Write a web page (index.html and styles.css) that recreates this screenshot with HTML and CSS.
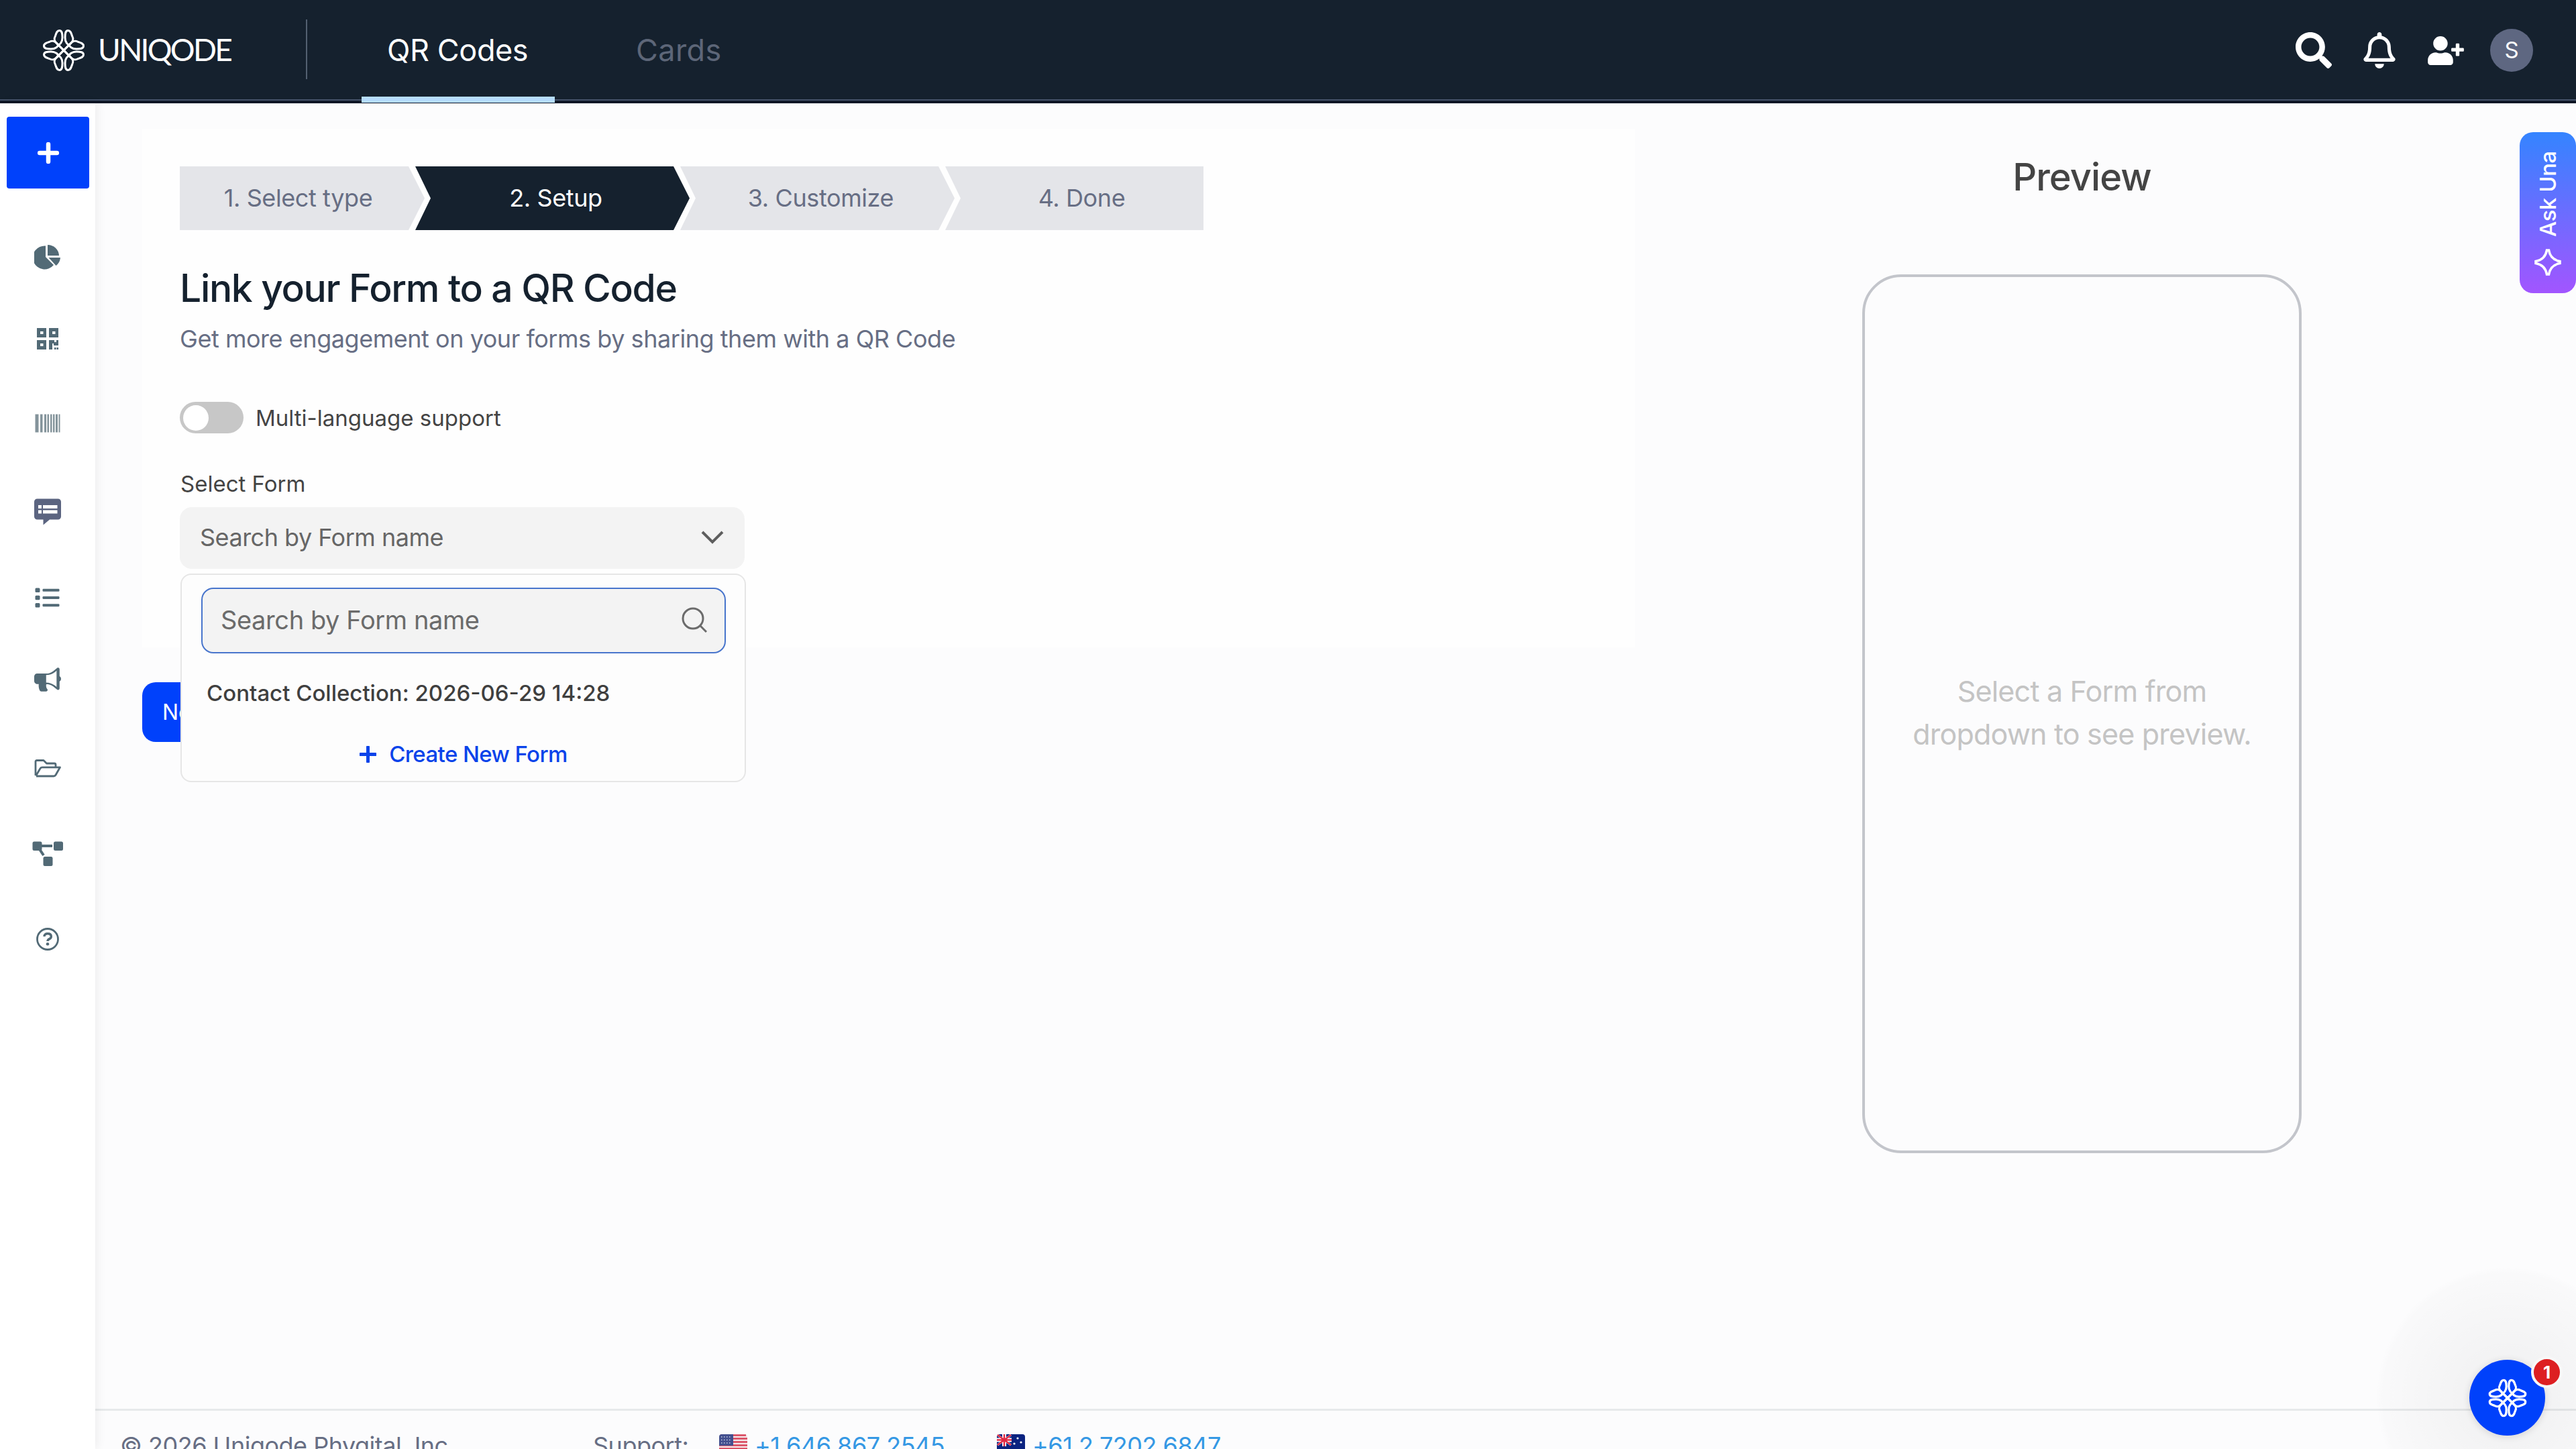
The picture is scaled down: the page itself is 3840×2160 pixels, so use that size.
FILE: index.html
```html
<!doctype html>
<html lang="en">
  <head>
    <meta charset="utf-8">
    <title>Uniqode - Link your Form to a QR Code</title>
    <meta name="viewport" content="width=device-width">
    <link rel="stylesheet" href="styles.css">
  </head>
  <body>
    <!-- shared logo mark -->
    <svg class="defs" width="0" height="0">
      <defs>
        <path id="petal" d="M0 0L-9 -9C-14.500 -13.500 -15 -17 -12.500 -21.500C-11 -26 -10 -29.500 -6.500 -29.500C-2.500 -29.500 -2 -25 -2 -19C-2 -12 -6 -8 -8.500 -8.500" />
        <g id="pair">
          <use href="#petal" />
          <use href="#petal" transform="scale(-1 1)" />
        </g>
        <g id="flower" fill="none" stroke="#fff" stroke-linejoin="round">
          <use href="#pair" />
          <use href="#pair" transform="rotate(90)" />
          <use href="#pair" transform="rotate(180)" />
          <use href="#pair" transform="rotate(270)" />
        </g>
      </defs>
    </svg>

    <header class="topbar">
      <div class="brand">
        <svg class="brand-mark" viewBox="-32 -32 64 64" stroke-width="3"><use href="#flower" /></svg>
        <span class="brand-name">UNIQODE</span>
      </div>
      <nav class="tabs">
        <a class="tab active">QR Codes</a>
        <a class="tab">Cards</a>
      </nav>
      <div class="tools">
        <svg class="tool-search" viewBox="0 0 512 512"><path fill="#fff" d="M505 442.700L405.300 343c-4.500-4.500-10.600-7-17-7H372c27.600-35.300 44-79.700 44-128C416 93.100 322.900 0 208 0S0 93.100 0 208s93.100 208 208 208c48.300 0 92.700-16.400 128-44v16.300c0 6.400 2.500 12.500 7 17l99.700 99.700c9.400 9.400 24.600 9.400 33.900 0l28.300-28.300c9.400-9.400 9.400-24.600.1-34zM208 336c-70.700 0-128-57.200-128-128 0-70.700 57.200-128 128-128 70.700 0 128 57.200 128 128 0 70.700-57.200 128-128 128z" /></svg>
        <svg class="tool-bell" viewBox="0 0 448 512"><path fill="#fff" d="M439.390 362.290c-19.320-20.760-55.470-51.990-55.470-154.290 0-77.700-54.480-139.900-127.940-155.160V32c0-17.670-14.320-32-31.980-32s-31.980 14.330-31.980 32v20.840C118.560 68.100 64.080 130.300 64.080 208c0 102.300-36.150 133.530-55.470 154.290-6 6.450-8.660 14.160-8.610 21.710.110 16.400 12.980 32 32.100 32h383.800c19.120 0 32-15.600 32.100-32 .050-7.550-2.610-15.270-8.610-21.710zM67.530 368c21.220-27.970 44.420-74.330 44.530-159.420 0-.2-.060-.380-.060-.580 0-61.860 50.140-112 112-112s112 50.140 112 112c0 .2-.060.380-.060.580.110 85.100 23.310 131.460 44.530 159.420H67.530zM224 512c35.320 0 63.970-28.650 63.970-64H160.030c0 35.350 28.650 64 63.970 64z" /></svg>
        <svg class="tool-user" viewBox="0 0 640 512"><path fill="#fff" d="M624 208h-64v-64c0-8.800-7.200-16-16-16h-32c-8.800 0-16 7.200-16 16v64h-64c-8.800 0-16 7.200-16 16v32c0 8.800 7.200 16 16 16h64v64c0 8.800 7.200 16 16 16h32c8.800 0 16-7.200 16-16v-64h64c8.800 0 16-7.200 16-16v-32c0-8.800-7.200-16-16-16zm-400 48c70.700 0 128-57.300 128-128S294.700 0 224 0 96 57.300 96 128s57.300 128 128 128zm89.600 32h-16.700c-22.200 10.200-46.900 16-72.900 16s-50.600-5.800-72.900-16h-16.700C60.200 288 0 348.200 0 422.400V464c0 26.500 21.500 48 48 48h352c26.500 0 48-21.500 48-48v-41.600c0-74.200-60.200-134.400-134.400-134.400z" /></svg>
        <div class="avatar">S</div>
      </div>
    </header>

    <div class="shell">
      <aside class="sidebar">
        <a class="create">
          <svg viewBox="0 0 32 32"><path d="M16 3v26M3 16h26" stroke="#fff" stroke-width="6.500" stroke-linecap="round" /></svg>
        </a>
        <nav class="side-nav">
          <!-- analytics -->
          <svg viewBox="0 0 40 40" fill="#526a76"><path d="M17 3.500V20L29 32A17.500 17.500 0 1 1 17 3.500Z" /><path d="M20 2A17 17 0 0 1 37 18H20Z" /><path d="M21.500 21H39A17 17 0 0 1 32.500 33Z" /></svg>
          <!-- qr codes -->
          <svg viewBox="0 0 40 40" fill="#526a76"><path fill-rule="evenodd" d="M4 4h14v14H4zM9 9v4h4.500V9zM22 4h14v14H22zM27 9v4h4.500V9zM4 22h14v14H4zM9 27v4h4.500v-4z" /><path d="M22 22h8v3h3v-3h3v8h-7v-3h-2v9h-5zM30 33h2.500v3H30zM33.500 33H36v3h-2.500z" /></svg>
          <!-- barcodes -->
          <svg viewBox="0 0 40 40" fill="#84949b"><path d="M1.500 6.500h5v27h-5zM9 6.500h3.500v27H9zM15 6.500h3v27h-3zM19.500 6.500H22v27h-2.500zM24 6.500h2.500v27H24zM28 6.500h2.500v27H28zM32 6.500h3v27h-3zM36.500 6.500h2v27h-2z" /></svg>
          <!-- forms -->
          <svg viewBox="0 0 40 40"><path fill="#5b6480" d="M4.500.5h31A4.500 4.500 0 0 1 40 5v22a4.500 4.500 0 0 1-4.500 4.500H23L13.500 39.500v-8h-9A4.500 4.500 0 0 1 0 27V5A4.500 4.500 0 0 1 4.500.5Z" /><path fill="#fff" d="M6 10h5v5H6zM13 10h21.500v5H13zM6 17.500h5v5H6zM13 17.500h21.500v5H13z" /></svg>
          <!-- lists -->
          <svg viewBox="0 0 40 40" fill="#526a76"><rect x="1.500" y="5.500" width="7" height="6.500" rx="1.500" /><rect x="1.500" y="16.800" width="7" height="6.500" rx="1.500" /><rect x="1.500" y="28" width="7" height="6.500" rx="1.500" /><rect x="12.500" y="6.800" width="25" height="4" rx="1.200" /><rect x="12.500" y="18" width="25" height="4" rx="1.200" /><rect x="12.500" y="29.200" width="25" height="4" rx="1.200" /></svg>
          <!-- campaigns -->
          <svg viewBox="0 0 576 512" fill="#526a76"><path d="M544 184.880V32.010C544 23.260 537.020 0 512.010 0c-7.120 0-14.190 2.380-19.980 7.020l-85.030 68.030C364.280 109.190 310.660 128 256 128H64c-35.350 0-64 28.650-64 64v96c0 35.350 28.650 64 64 64l33.700 0c-1.390 10.480-2.180 21.140-2.180 32 0 39.770 9.260 77.350 25.560 110.940 5.190 10.690 16.520 17.060 28.400 17.060h106.280c26.050 0 41.690-29.840 25.900-50.560-16.400-21.520-26.150-48.360-26.150-77.440 0-11.110 1.620-21.790 4.410-32H256c54.660 0 108.280 18.810 150.980 52.950l85.030 68.030a32.023 32.023 0 0 0 19.980 7.020c24.920 0 32-22.780 32-32V295.130c19.050-11.090 32-31.490 32-55.120.010-23.640-12.940-44.040-31.990-55.130zm-64 228.530l-33.050-26.450C392.950 343.780 325.120 320 256 320v-160c69.120 0 136.950-23.780 190.950-66.950L480 66.590v346.820z" /></svg>
          <!-- folders -->
          <svg viewBox="0 0 40 40" fill="none" stroke="#526a76" stroke-width="2.800" stroke-linejoin="round"><path d="M2 31V10.500Q2 8.500 4 8.500h10l4.500 4.500H30q2 0 2 2v3.500M2.500 31.500l6.500-11q1-1.700 3-1.700h26.500l-6.500 11.500q-1 1.700-3 1.700H3" /></svg>
          <!-- integrations -->
          <svg class="wide" viewBox="0 0 46 40" fill="#526a76"><path d="M8 8h22M9 10l8 12" stroke="#526a76" stroke-width="4" /><rect x="0.500" y="1.500" width="14" height="13.500" rx="2.500" /><rect x="32" y="1.500" width="14" height="13.500" rx="2.500" /><rect x="16.500" y="24" width="14" height="14" rx="2.500" /></svg>
          <!-- help -->
          <svg viewBox="0 0 40 40" fill="none" stroke="#526a76"><circle cx="20" cy="20" r="15.500" stroke-width="2.800" /><path d="M14.800 16q.7-4.300 5.200-4.300 5.300 0 5.300 4.200 0 2.600-3 4-2.300 1.100-2.300 3" stroke-width="3.400" /><circle cx="20" cy="27.300" r="2.300" fill="#526a76" stroke="none" /></svg>
        </nav>
      </aside>

      <div class="page">
        <main class="content">
          <div class="form-side">
            <section class="card">
              <ol class="steps">
                <li class="step first">1. Select type</li>
                <li class="step current">2. Setup</li>
                <li class="step">3. Customize</li>
                <li class="step last">4. Done</li>
              </ol>
              <h1>Link your Form to a QR Code</h1>
              <p class="lead">Get more engagement on your forms by sharing them with a QR Code</p>
              <div class="toggle-row">
                <span class="toggle"></span>
                <span>Multi-language support</span>
              </div>
              <div class="field-label">Select Form</div>
              <div class="select-wrap">
                <div class="select">
                  <span>Search by Form name</span>
                  <svg class="chevron" viewBox="0 0 34 20"><path d="M2 2l15 15L32 2" fill="none" stroke="#5e5e5e" stroke-width="4" /></svg>
                </div>
                <div class="dropdown">
                  <div class="search">
                    <span>Search by Form name</span>
                    <svg class="lens" viewBox="0 0 38 38"><circle cx="17" cy="17" r="15" fill="none" stroke="#6b6b6b" stroke-width="3" /><path d="M27.500 27.500l9.500 9.500" stroke="#6b6b6b" stroke-width="3" /></svg>
                  </div>
                  <div class="option">Contact Collection: 2026-06-29 14:28</div>
                  <div class="new-form">
                    <svg class="plus" viewBox="0 0 25 25"><path d="M12.500 1.500v22M1.500 12.500h22" stroke="#0a43ea" stroke-width="5" stroke-linecap="round" /></svg>
                    <span>Create New Form</span>
                  </div>
                </div>
              </div>
            </section>
            <button class="next">Next</button>
          </div>

          <section class="preview">
            <h2>Preview</h2>
            <div class="phone">
              <p>Select a Form from<br>dropdown to see preview.</p>
            </div>
          </section>
        </main>

        <footer class="footer">
          <span class="copyright">© 2026 Uniqode Phygital, Inc.</span>
          <span class="support">Support:</span>
          <a class="phone-link us">
            <svg class="flag" viewBox="0 0 42 32"><rect width="42" height="32" rx="4" fill="#f4e4e6" /><path d="M2 1.500h38M0 6.500h42M0 11.500h42M0 16.500h42M0 21.500h42M0 26.500h42M2 31h38" stroke="#d8435a" stroke-width="2.500" /><path d="M4 0h17v17H0V4q0-4 4-4z" fill="#43508f" /><path d="M3 4h16M3 8.500h16M3 13h16" stroke="#c5cbe2" stroke-width="1.500" stroke-dasharray="1.500 2.500" /></svg>
            +1 646 867 2545
          </a>
          <a class="phone-link au">
            <svg class="flag" viewBox="0 0 42 32"><rect width="42" height="32" rx="4" fill="#0b2380" /><path d="M1 1l20 15M21 1L1 16" stroke="#fff" stroke-width="3" /><path d="M11 0v18M0 8.500h22" stroke="#fff" stroke-width="6" /><path d="M11 0v18M0 8.500h22M1 1l20 15M21 1L1 16" stroke="#df2a44" stroke-width="2.500" /><g fill="#fff"><circle cx="11" cy="25" r="2.500" /><circle cx="31" cy="6" r="1.600" /><circle cx="26" cy="14" r="1.600" /><circle cx="36" cy="12" r="1.600" /><circle cx="31" cy="26" r="1.600" /></g></svg>
            +61 2 7202 6847
          </a>
        </footer>
      </div>
    </div>

    <div class="ask-una">
      <span>Ask Una</span>
      <svg viewBox="0 0 40 40"><path d="M18.500 2Q16 16 2 18.500V21.500Q16 24 18.500 38H21.500Q24 24 38 21.500V18.500Q24 16 21.500 2Z" fill="none" stroke="#fff" stroke-width="3.600" /></svg>
    </div>

    <div class="chat-glow"></div>
    <div class="chat">
      <svg viewBox="-32 -32 64 64" stroke-width="3.600"><use href="#flower" /></svg>
      <span class="chat-badge">1</span>
    </div>
  </body>
</html>
```
FILE: styles.css
```css
* {
	box-sizing: border-box;
}
body {
	margin: 0;
	width: 3840px;
	height: 2160px;
	position: relative;
	overflow: hidden;
	background: #fcfcfd;
	font-family: Inter, "Liberation Sans", sans-serif;
	color: #444;
}
h1, h2, p, ol {
	margin: 0;
	padding: 0;
}
svg {
	display: block;
	flex: none;
}
.defs {
	position: absolute;
}

/* top bar */
.topbar {
	display: flex;
	height: 154px;
	background: linear-gradient(#15212e 148px, #46536a 148px, #46536a 150px, #0d1726 150px);
	color: #fff;
}
.brand {
	display: flex;
	align-items: center;
	width: 458px;
	height: 89px;
	margin-top: 29px;
	padding: 0 0 0 63px;
	border-right: 2px solid #536071;
}
.brand-mark {
	width: 64px;
	height: 64px;
	margin-top: 2px;
}
.brand-name {
	margin: 0 0 0 19px;
	font-family: Lato, sans-serif;
	font-size: 46px;
	letter-spacing: -2.7px;
	line-height: 60px;
}
.tabs {
	display: flex;
	margin-left: 81px;
	gap: 83px;
}
.tab {
	height: 153px;
	padding: 0 38px;
	font-size: 45px;
	line-height: 150px;
	letter-spacing: .4px;
	white-space: nowrap;
	color: #5d6678;
}
.tab.active {
	width: 288px;
	letter-spacing: -.4px;
	color: #fff;
	border-bottom: 9px solid #b5dcfd;
}
.tools {
	display: flex;
	align-items: center;
	height: 150px;
	margin-left: auto;
	margin-right: 64px;
}
.tool-search {
	width: 54px;
	height: 54px;
}
.tool-bell {
	width: 48px;
	height: 54px;
	margin-left: 47px;
}
.tool-user {
	width: 54px;
	height: 43px;
	margin-left: 48px;
}
.avatar {
	width: 64px;
	height: 64px;
	margin-left: 39px;
	border-radius: 50%;
	background: #5e6781;
	font-size: 33px;
	line-height: 63px;
	text-align: center;
}

.shell {
	display: flex;
	height: 2006px;
}

/* sidebar */
.sidebar {
	position: relative;
	width: 142px;
	padding: 20px 10px 0;
	background: #fff;
	box-shadow: 2px 0 14px rgba(0, 0, 0, .07);
}
.create {
	display: flex;
	align-items: center;
	justify-content: center;
	height: 107px;
	width: 123px;
	border-radius: 4px;
	background: #0041fb;
}
.create svg {
	width: 32px;
	height: 32px;
}
.side-nav {
	display: grid;
	grid-template-rows: 122px 126px 132px 128px 122px 132px 128px 127px 40px;
	justify-items: center;
	margin-top: 82px;
}
.side-nav svg {
	width: 40px;
	height: 40px;
}
.side-nav .wide {
	width: 46px;
}

/* page */
.page {
	display: flex;
	flex-direction: column;
	flex: 1;
}
.content {
	display: flex;
	height: 1946px;
	padding: 38px 0 0 70px;
}
.form-side {
	width: 2225px;
}
.card {
	height: 773px;
	padding: 56px;
	background: #fefefe;
}
.steps {
	display: flex;
	list-style: none;
}
.step {
	width: 409px;
	height: 95px;
	margin-left: -14px;
	padding-left: 10px;
	background: #e4e5e9;
	color: #676e84;
	font-size: 36px;
	line-height: 95px;
	letter-spacing: -.4px;
	text-align: center;
	clip-path: polygon(0 0, 385px 0, 100% 50%, 385px 100%, 0 100%, 23px 50%);
}
.step.first {
	width: 365px;
	margin-left: 0;
	padding: 0 12px 0 0;
	clip-path: polygon(0 0, 341px 0, 100% 50%, 341px 100%, 0 100%);
}
.step.current {
	background: #15212e;
	color: #fff;
}
.step.last {
	width: 385px;
	padding-left: 22px;
	clip-path: polygon(0 0, 100% 0, 100% 100%, 0 100%, 23px 50%);
}
h1 {
	margin-top: 52px;
	font-size: 57px;
	font-weight: 500;
	line-height: 70px;
	letter-spacing: -1.35px;
	color: #15212e;
}
.lead {
	margin-top: 18px;
	font-size: 36px;
	line-height: 44px;
	letter-spacing: -.46px;
	color: #676e84;
}
.toggle-row {
	display: flex;
	align-items: center;
	gap: 18px;
	height: 47px;
	margin-top: 72px;
	font-size: 33px;
	line-height: 40px;
}
.toggle {
	width: 95px;
	height: 47px;
	padding: 5px;
	border-radius: 24px;
	background: #c7c7c7;
}
.toggle::before {
	content: "";
	display: block;
	width: 38px;
	height: 38px;
	border-radius: 50%;
	background: #fff;
}
.field-label {
	margin-top: 55px;
	padding-left: 1px;
	font-size: 33px;
	line-height: 40px;
}
.select-wrap {
	position: relative;
	width: 842px;
	margin-top: 15px;
}
.select {
	display: flex;
	align-items: center;
	justify-content: space-between;
	height: 92px;
	padding: 0 31px 2px 30px;
	border-radius: 18px;
	background: #f3f3f3;
	font-size: 36px;
	letter-spacing: -.5px;
	color: #666;
}
.chevron {
	width: 34px;
	height: 20px;
}
.dropdown {
	position: absolute;
	top: 99px;
	left: 1px;
	width: 843px;
	height: 311px;
	padding: 19px 28px 0 29px;
	border: 2px solid #e6e6e6;
	border-radius: 16px;
	background: #fdfdfd;
}
.search {
	display: flex;
	align-items: center;
	justify-content: space-between;
	height: 98px;
	padding: 0 26px 2px 27px;
	border: 2px solid #4875cc;
	border-radius: 18px;
	background: #f3f3f3;
	font-size: 38px;
	letter-spacing: -.4px;
	color: #6b6b6b;
}
.lens {
	width: 38px;
	height: 38px;
}
.option {
	margin: 39px 0 0 8px;
	font-size: 33px;
	font-weight: 500;
	line-height: 40px;
	color: #3f3f3f;
}
.new-form {
	display: flex;
	align-items: center;
	justify-content: center;
	gap: 19px;
	margin-top: 51px;
	font-size: 33px;
	font-weight: 500;
	line-height: 40px;
	letter-spacing: -.6px;
	color: #0a43ea;
}
.plus {
	width: 25px;
	height: 25px;
}
.next {
	display: block;
	width: 130px;
	height: 89px;
	margin-top: 52px;
	padding: 0 0 0 30px;
	border: 0;
	border-radius: 20px;
	background: #0041fb;
	color: #fff;
	font-family: inherit;
	font-size: 32px;
	text-align: left;
}

/* preview */
.preview {
	width: 655px;
	margin-left: 339px;
	padding-top: 38px;
}
.preview h2 {
	font-size: 56px;
	font-weight: 500;
	line-height: 68px;
	letter-spacing: -.9px;
	text-align: center;
}
.phone {
	display: flex;
	align-items: center;
	justify-content: center;
	height: 1310px;
	margin-top: 111px;
	border: 4px solid #c3c5cb;
	border-radius: 58px;
}
.phone p {
	margin-bottom: 4px;
	font-size: 43px;
	line-height: 64px;
	letter-spacing: -.8px;
	text-align: center;
	color: #c4c4c4;
}

/* footer */
.footer {
	display: flex;
	height: 60px;
	padding: 30px 0 0 37px;
	border-top: 3px solid #e7e9eb;
	font-size: 36px;
	line-height: 44px;
	letter-spacing: -.5px;
	color: #676e84;
	white-space: nowrap;
	overflow: hidden;
}
.copyright {
	width: 705px;
}
.support {
	width: 188px;
}
.phone-link {
	display: flex;
	gap: 11px;
	width: 414px;
	color: #3598e4;
}
.flag {
	width: 42px;
	height: 32px;
	margin-top: 5px;
}

/* floating widgets */
.ask-una {
	position: absolute;
	top: 197px;
	right: 0;
	display: flex;
	flex-direction: column;
	align-items: center;
	width: 84px;
	height: 240px;
	padding-top: 29px;
	border-radius: 20px;
	background: linear-gradient(#3484ff, #a255ff);
	color: #fff;
}
.ask-una span {
	height: 127px;
	writing-mode: vertical-rl;
	transform: rotate(180deg);
	font-size: 33px;
	font-weight: 500;
	line-height: 40px;
	letter-spacing: -.5px;
	white-space: nowrap;
}
.ask-una svg {
	width: 40px;
	height: 40px;
	margin-top: 18px;
}
.chat-glow {
	position: absolute;
	right: -92px;
	bottom: -118px;
	width: 390px;
	height: 390px;
	border-radius: 50%;
	background: radial-gradient(closest-side, rgba(0, 0, 0, .05), rgba(0, 0, 0, .01) 95%, transparent);
}
.chat {
	position: absolute;
	right: 46px;
	bottom: 20px;
	display: flex;
	align-items: center;
	justify-content: center;
	width: 113px;
	height: 113px;
	border-radius: 50%;
	background: #0041fb;
	box-shadow: 0 2px 12px rgba(0, 0, 0, .12);
}
.chat svg {
	width: 58px;
	height: 58px;
}
.chat-badge {
	position: absolute;
	top: -5px;
	right: -26px;
	width: 47px;
	height: 47px;
	border: 4px solid #f8f8f8;
	border-radius: 50%;
	background: #dd1f22;
	color: #fff;
	font-size: 26px;
	font-weight: 700;
	line-height: 39px;
	text-align: center;
}
```
